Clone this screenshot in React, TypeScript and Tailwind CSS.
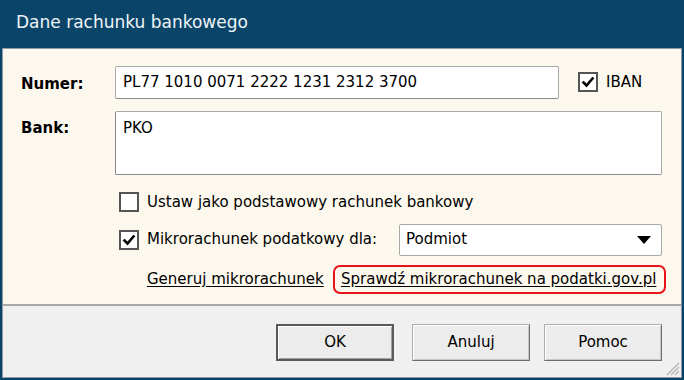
import React from "react";

const font = { fontFamily: "'DejaVu Sans', 'Liberation Sans', sans-serif" };

function Check({ checked }: { checked: boolean }) {
  return (
    <div className="w-[20px] h-[20px] border-2 border-[#555] bg-white flex items-center justify-center shrink-0">
      {checked && (
        <svg width="14" height="14" viewBox="0 0 14 14">
          <path d="M2.5 7.5 L5.5 10.5 L11.5 3.5" stroke="#000" strokeWidth="2.6" fill="none" strokeLinecap="square" />
        </svg>
      )}
    </div>
  );
}

function Btn({ label, def, cls }: { label: string; def?: boolean; cls?: string }) {
  return (
    <div
      className={
        "w-[118px] h-[37px] flex items-center justify-center text-[15px] text-black bg-[#ececec] " +
        (cls ?? "") +
        " " +
        (def
          ? "border-2 border-[#5a5a5a] shadow-[inset_1px_1px_0_#fff,inset_-1px_-1px_0_#a0a0a0]"
          : "border border-[#adadad] border-b-[#6d6d6d] border-r-[#6d6d6d] shadow-[inset_1px_1px_0_#fff,inset_-1px_-1px_0_#c8c8c8]")
      }
    >
      {label}
    </div>
  );
}

export default function App() {
  return (
    <div style={font} className="w-[684px] h-[380px] bg-[#0a4569] flex flex-col px-[2px] pb-[2px] text-black">
      <div className="h-[48px] shrink-0 flex items-center pl-[14px] pb-[2px] text-[17px] text-[#eef3f7]">
        Dane rachunku bankowego
      </div>
      <div className="flex-1 flex flex-col border border-[#8e9aa3]">
        <div className="h-[255px] shrink-0 bg-[#fdf8ed] pt-[17px] flex flex-col text-[15px]">
          <div className="flex items-start">
            <div className="w-[112px] pl-[18px] pt-[7px] font-bold">Numer:</div>
            <div className="w-[444px] h-[33px] bg-white border border-[#a9a9a9] border-b-[#8a8a8a] rounded-[2px] flex items-center pl-[7px]">
              PL77 1010 0071 2222 1231 2312 3700
            </div>
            <div className="ml-[19px] mt-[5px] flex items-center gap-[8px]">
              <Check checked />
              <span>IBAN</span>
            </div>
          </div>
          <div className="flex items-start mt-[12px]">
            <div className="w-[112px] pl-[18px] pt-[6px] font-bold">Bank:</div>
            <div className="w-[547px] h-[64px] bg-white border border-[#a9a9a9] border-b-[#8a8a8a] border-l-[#8a8a8a] rounded-[2px] pl-[7px] pt-[5px]">
              PKO
            </div>
          </div>
          <div className="flex items-center ml-[116px] mt-[16px] gap-[8px]">
            <Check checked={false} />
            <span>Ustaw jako podstawowy rachunek bankowy</span>
          </div>
          <div className="flex items-center ml-[116px] mt-[10px]">
            <Check checked />
            <span className="ml-[8px] w-[252px]">Mikrorachunek podatkowy dla:</span>
            <div className="w-[263px] h-[32px] bg-white border border-[#a9a9a9] rounded-[2px] flex items-center justify-between pl-[6px] pr-[10px]">
              <span>Podmiot</span>
              <svg width="14" height="8" viewBox="0 0 14 8">
                <path d="M0 0 H14 L7 8 Z" fill="#000" />
              </svg>
            </div>
          </div>
          <div className="flex items-center ml-[144px] mt-[9px]">
            <span className="underline underline-offset-2 w-[186px]">Generuj mikrorachunek</span>
            <div className="border-2 border-[#e8141a] rounded-[7px] h-[29px] w-[333px] flex items-center pl-[6px]">
              <span className="underline underline-offset-2">Sprawdź mikrorachunek na podatki.gov.pl</span>
            </div>
          </div>
        </div>
        <div className="border-t-2 border-[#a8a8a8] flex-1 bg-[#f0f0f0] relative flex items-start pt-[18px] pl-[273px]">
          <Btn label="OK" def />
          <Btn label="Anuluj" cls="ml-[18px]" />
          <Btn label="Pomoc" cls="ml-[14px]" />
          <svg className="absolute right-[1px] bottom-[1px]" width="16" height="16" viewBox="0 0 16 16">
            <path d="M15 3 L3 15 M15 7 L7 15 M15 11 L11 15" stroke="#b8b8b8" strokeWidth="1.5" />
          </svg>
        </div>
      </div>
    </div>
  );
}
